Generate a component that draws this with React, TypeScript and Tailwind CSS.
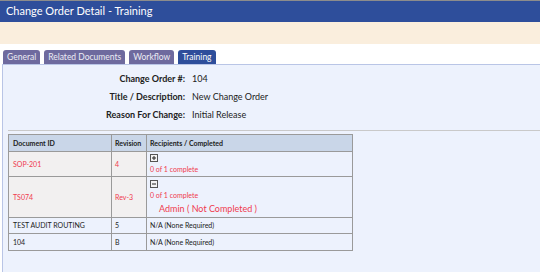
const tabs = [
  { label: 'General', active: false },
  { label: 'Related Documents', active: false },
  { label: 'Workflow', active: false },
  { label: 'Training', active: true },
]

const fields = [
  { label: 'Change Order #:', value: '104' },
  { label: 'Title / Description:', value: 'New Change Order' },
  { label: 'Reason For Change:', value: 'Initial Release' },
]

const PlusBox = ({ minus }: { minus?: boolean }) => (
  <svg width="8" height="8" viewBox="0 0 8 8" className="block">
    <rect x="0.5" y="0.5" width="7" height="7" fill="#f4f4f4" stroke="#555" />
    <line x1="2" y1="4" x2="6" y2="4" stroke="#222" />
    {!minus && <line x1="4" y1="2" x2="4" y2="6" stroke="#222" />}
  </svg>
)

const App = () => {
  return (
    <div className="w-[540px] h-[272px] bg-white overflow-hidden font-['Lato',sans-serif]">
      <div className="h-[22px] bg-[#2e4e9b] border-t border-[#8c8c8c] flex items-center pl-[6px]">
        <span className="text-white text-[11px]">Change Order Detail - Training</span>
      </div>
      <div className="h-[22px] bg-[#faeedd]" />
      <div className="h-[6px]" />
      <div className="flex items-end gap-[4px] pl-[3px] h-[14px]">
        {tabs.map((t) => (
          <div
            key={t.label}
            className={`h-[14px] px-[4px] rounded-t-[3px] flex items-center text-[8.5px] ${
              t.active ? 'bg-[#2e4e9b] text-white' : 'bg-[#6e6a9e] text-[#ececf4]'
            }`}
          >
            {t.label}
          </div>
        ))}
      </div>
      <div className="ml-[2px] h-[208px] bg-[#edf2fd] border-l border-t border-[#b9c5e6] pl-[5px]">
        <div className="pt-[7px] flex flex-col gap-[5px] text-[9px] text-[#222]">
          {fields.map((f) => (
            <div key={f.label} className="flex h-[13px] items-center">
              <div className="w-[177px] text-right font-bold">{f.label}</div>
              <div className="pl-[7px]">{f.value}</div>
            </div>
          ))}
        </div>
        <div className="mt-[9px] border-t border-[#c9c9c9]" />
        <table className="mt-[3px] w-[345px] border-collapse text-[7px] text-[#222]">
          <thead>
            <tr className="h-[17px] bg-[#c9d6e8] font-bold">
              <th className="w-[103px] border border-[#9a9a9a] text-left pl-[4px] font-bold">Document ID</th>
              <th className="w-[35px] border border-[#9a9a9a] text-left pl-[3px] font-bold">Revision</th>
              <th className="border border-[#9a9a9a] text-left pl-[3px] font-bold">Recipients / Completed</th>
            </tr>
          </thead>
          <tbody>
            <tr className="h-[25px]">
              <td className="border border-[#9a9a9a] bg-[#f2f0f0] pl-[4px] text-[#f03a4e]">SOP-201</td>
              <td className="border border-[#9a9a9a] bg-[#f2f0f0] pl-[3px] text-[#f03a4e]">4</td>
              <td className="border border-[#9a9a9a] pl-[3px] text-[#f03a4e]">
                <div className="flex flex-col gap-[2px]">
                  <PlusBox />
                  <span>0 of 1 complete</span>
                </div>
              </td>
            </tr>
            <tr className="h-[41px]">
              <td className="border border-[#9a9a9a] bg-[#f2f0f0] pl-[4px] text-[#f03a4e]">TS074</td>
              <td className="border border-[#9a9a9a] bg-[#f2f0f0] pl-[3px] text-[#f03a4e]">Rev-3</td>
              <td className="border border-[#9a9a9a] pl-[3px] align-top pt-[3px] text-[#f03a4e]">
                <div className="flex flex-col gap-[2px]">
                  <PlusBox minus />
                  <span>0 of 1 complete</span>
                  <span className="pl-[9px] text-[9px] leading-[12px]">Admin ( Not Completed )</span>
                </div>
              </td>
            </tr>
            <tr className="h-[16px]">
              <td className="border border-[#9a9a9a] pl-[4px]">TEST AUDIT ROUTING</td>
              <td className="border border-[#9a9a9a] pl-[3px]">5</td>
              <td className="border border-[#9a9a9a] pl-[3px]">N/A (None Required)</td>
            </tr>
            <tr className="h-[17px]">
              <td className="border border-[#9a9a9a] pl-[4px]">104</td>
              <td className="border border-[#9a9a9a] pl-[3px]">B</td>
              <td className="border border-[#9a9a9a] pl-[3px]">N/A (None Required)</td>
            </tr>
          </tbody>
        </table>
      </div>
    </div>
  )
}

export default App
